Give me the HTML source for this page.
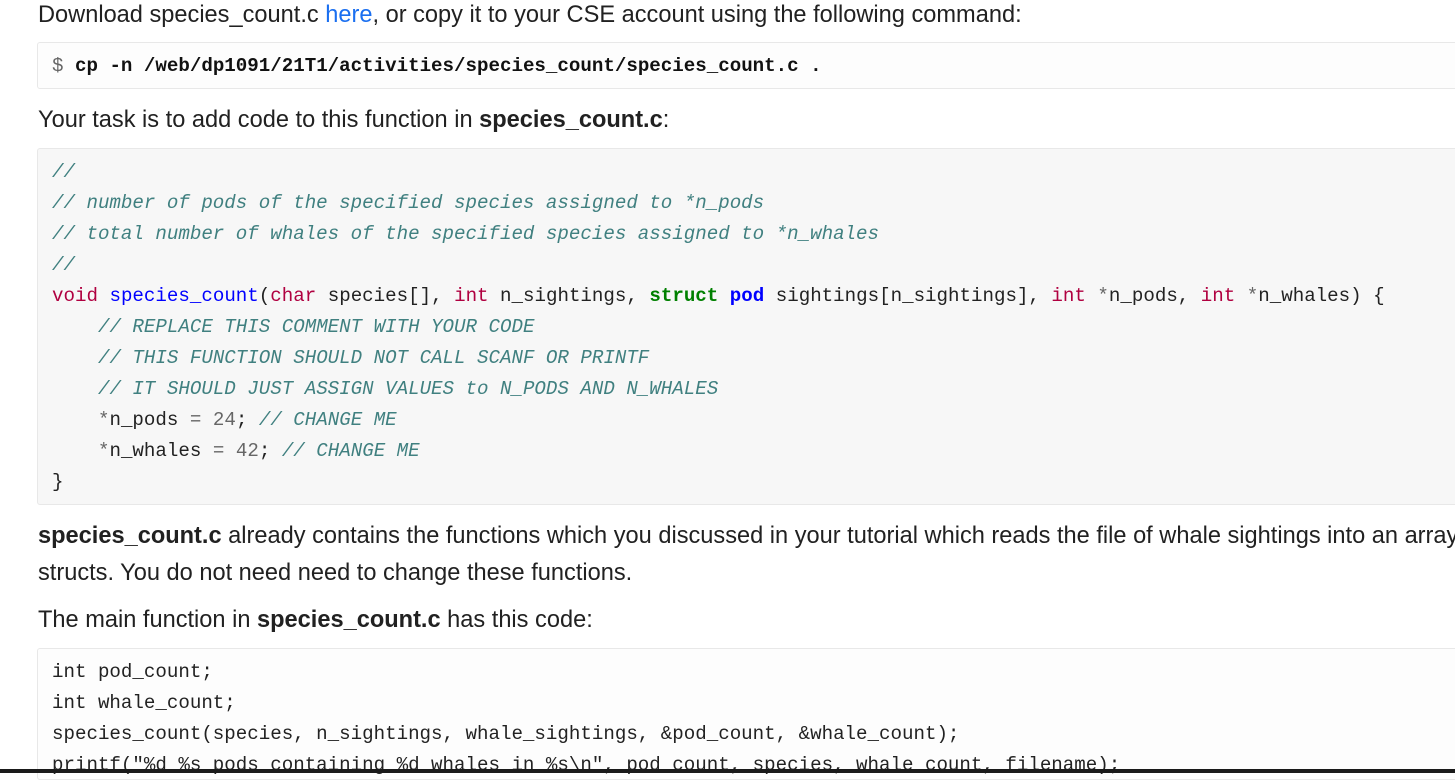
<!DOCTYPE html>
<html><head><meta charset="utf-8"><style>
body{margin:0;background:#fff;width:1455px;height:773px;overflow:hidden;position:relative;font-family:"Liberation Sans",sans-serif;color:#212121}
.p{position:absolute;left:38px;font-size:23.6px;white-space:nowrap;line-height:30px}
.p b{font-weight:bold}
a{color:#1a6ff0;text-decoration:none}
.blk{position:absolute;left:37px;width:1440px;border:1px solid #e8e8e8;border-right:none;border-radius:3px 0 0 3px}
pre{margin:0;font-family:"Liberation Mono",monospace;font-size:19.15px;line-height:31px;color:#222;position:absolute;left:14px}
.c{color:#408080;font-style:italic}
.k{color:#b00040}
.f{color:#0000ff}
.g{color:#008000;font-weight:bold}
.b{color:#0000ff;font-weight:bold}
.o{color:#666}
</style></head><body>
<div class="p" style="top:0px">Download species_count.c <a>here</a>, or copy it to your CSE account using the following command:</div>
<div class="blk" style="top:42px;height:45px;background:#fdfdfd"><pre style="top:8px;font-weight:bold;color:#111"><span style="color:#666;font-weight:normal">$</span> cp -n /web/dp1091/21T1/activities/species_count/species_count.c .</pre></div>
<div class="p" style="top:105px">Your task is to add code to this function in <b>species_count.c</b>:</div>
<div class="blk" style="top:148px;height:355px;background:#f7f7f7"><pre style="top:8px"><span class="c">//</span>
<span class="c">// number of pods of the specified species assigned to *n_pods</span>
<span class="c">// total number of whales of the specified species assigned to *n_whales</span>
<span class="c">//</span>
<span class="k">void</span> <span class="f">species_count</span>(<span class="k">char</span> species[], <span class="k">int</span> n_sightings, <span class="g">struct</span> <span class="b">pod</span> sightings[n_sightings], <span class="k">int</span> <span class="o">*</span>n_pods, <span class="k">int</span> <span class="o">*</span>n_whales) {
    <span class="c">// REPLACE THIS COMMENT WITH YOUR CODE</span>
    <span class="c">// THIS FUNCTION SHOULD NOT CALL SCANF OR PRINTF</span>
    <span class="c">// IT SHOULD JUST ASSIGN VALUES to N_PODS AND N_WHALES</span>
    <span class="o">*</span>n_pods <span class="o">=</span> <span class="o">24</span>; <span class="c">// CHANGE ME</span>
    <span class="o">*</span>n_whales <span class="o">=</span> <span class="o">42</span>; <span class="c">// CHANGE ME</span>
}</pre></div>
<div class="p" style="top:521px"><b>species_count.c</b> already contains the functions which you discussed in your tutorial which reads the file of whale sightings into an array of</div>
<div class="p" style="top:558px">structs. You do not need need to change these functions.</div>
<div class="p" style="top:605px">The main function in <b>species_count.c</b> has this code:</div>
<div class="blk" style="top:648px;height:130px;background:#fdfdfd"><pre style="top:8px">int pod_count;
int whale_count;
species_count(species, n_sightings, whale_sightings, &amp;pod_count, &amp;whale_count);
printf("%d %s pods containing %d whales in %s\n", pod_count, species, whale_count, filename);</pre></div>
<div style="position:absolute;left:0;top:769px;width:1455px;height:4px;background:#1a1a1a"></div>
</body></html>
